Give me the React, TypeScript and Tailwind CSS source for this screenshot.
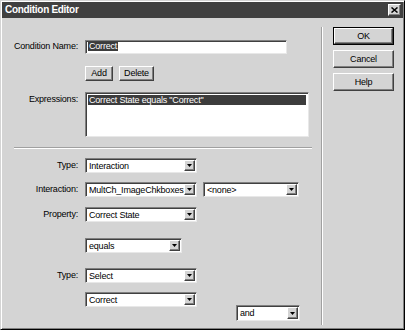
import React from "react";

const raised =
  "bg-[#d4d4d4] border border-t-white border-l-white border-r-[#404040] border-b-[#404040] shadow-[inset_-1px_-1px_0_#808080]";
const sunken =
  "bg-white border border-t-[#808080] border-l-[#808080] border-r-[#e8e8e8] border-b-[#e8e8e8] shadow-[inset_1px_1px_0_#404040]";

function Arrow() {
  return (
    <div className={`${raised} w-[11px] h-full flex items-center justify-center shrink-0`}>
      <svg width="5" height="3" viewBox="0 0 5 3">
        <polygon points="0,0 5,0 2.5,3" fill="#000" />
      </svg>
    </div>
  );
}

function Combo({ text, w, h = "h-[15px]", extra = "" }: { text: string; w: string; h?: string; extra?: string }) {
  return (
    <div className={`${sunken} ${w} ${h} ${extra} flex items-stretch p-[1px] pl-[2px] shrink-0`}>
      <div className="flex-1 overflow-hidden whitespace-nowrap leading-[11px] pl-[1px] pt-[1px]">{text}</div>
      <Arrow />
    </div>
  );
}

function Label({ children }: { children: React.ReactNode }) {
  return <div className="w-[76px] mr-[7px] text-right shrink-0 leading-[15px]">{children}</div>;
}

function Btn({ children, w, extra = "" }: { children: React.ReactNode; w: string; extra?: string }) {
  return (
    <div className={`${raised} ${w} ${extra} flex items-center justify-center leading-none`}>{children}</div>
  );
}

export default function App() {
  return (
    <div className="w-[405px] h-[330px] bg-[#d4d4d4] font-['Liberation_Sans',Arial,sans-serif] text-[9px] tracking-[-0.2px] text-black border border-t-[#d4d4d4] border-l-[#d4d4d4] border-r-black border-b-black shadow-[inset_1px_1px_0_#fff,inset_-1px_-1px_0_#808080] p-[1px] flex flex-col overflow-hidden">
      {/* Title bar */}
      <div className="h-[16px] bg-[#404040] flex items-center justify-between pl-[3px] pr-[2px] shrink-0">
        <div className="text-white font-bold text-[10px] tracking-[-0.3px] leading-none">Condition Editor</div>
        <div className={`${raised} w-[13px] h-[12px] flex items-center justify-center`}>
          <svg width="7" height="6" viewBox="0 0 7 6">
            <path d="M0.5 0.5 L6.5 5.5 M6.5 0.5 L0.5 5.5" stroke="#000" strokeWidth="1.5" />
          </svg>
        </div>
      </div>

      {/* Body */}
      <div className="flex flex-1">
        {/* Left column */}
        <div className="w-[318px] flex flex-col shrink-0">
          <div className="flex mt-[21px] items-center">
            <Label>Condition Name:</Label>
            <div className={`${sunken} w-[202px] h-[14px] p-[2px] flex items-center`}>
              <span className="bg-[#3c3c3c] text-white leading-[9px] px-[1px]">Correct</span>
            </div>
          </div>
          <div className="flex mt-[12px] ml-[83px] gap-[6px]">
            <Btn w="w-[28px] h-[15px]">Add</Btn>
            <Btn w="w-[35px] h-[15px]">Delete</Btn>
          </div>
          <div className="flex mt-[11px]">
            <div className="w-[76px] mr-[7px] text-right shrink-0 leading-[11px] pt-[2px]">Expressions:</div>
            <div className={`${sunken} w-[224px] h-[45px] p-[2px]`}>
              <div className="bg-[#3c3c3c] text-white leading-[10px] h-[10px] pl-[1px]">
                Correct State equals "Correct"
              </div>
            </div>
          </div>
          <div className="mt-[10px] ml-[12px] w-[298px] h-[2px] border-t border-t-[#a0a0a0] border-b border-b-white" />
          <div className="flex mt-[9px]">
            <Label>Type:</Label>
            <Combo text="Interaction" w="w-[112px]" />
          </div>
          <div className="flex mt-[9px]">
            <Label>Interaction:</Label>
            <Combo text="MultCh_ImageChkboxes1" w="w-[112px]" />
            <Combo text="<none>" w="w-[96px]" extra="ml-[6px]" />
          </div>
          <div className="flex mt-[10px]">
            <Label>Property:</Label>
            <Combo text="Correct State" w="w-[112px]" />
          </div>
          <div className="flex mt-[16px] ml-[83px]">
            <Combo text="equals" w="w-[97px]" />
          </div>
          <div className="flex mt-[15px]">
            <Label>Type:</Label>
            <Combo text="Select" w="w-[112px]" />
          </div>
          <div className="flex mt-[9px] ml-[83px] items-start">
            <Combo text="Correct" w="w-[112px]" />
            <Combo text="and" w="w-[64px]" h="h-[16px]" extra="ml-[39px] mt-[13px]" />
          </div>
        </div>

        {/* Vertical separator */}
        <div className="mt-[9px] mb-[3px] ml-[1px] w-[2px] border-l border-l-[#a0a0a0] border-r border-r-white shrink-0" />

        {/* Right column */}
        <div className="flex flex-col ml-[10px] mt-[9px] gap-[5px]">
          <div className="w-[61px] h-[18px] border border-black">
            <Btn w="w-full h-full">OK</Btn>
          </div>
          <Btn w="w-[61px] h-[18px]">Cancel</Btn>
          <Btn w="w-[61px] h-[18px]">Help</Btn>
        </div>
      </div>
    </div>
  );
}
